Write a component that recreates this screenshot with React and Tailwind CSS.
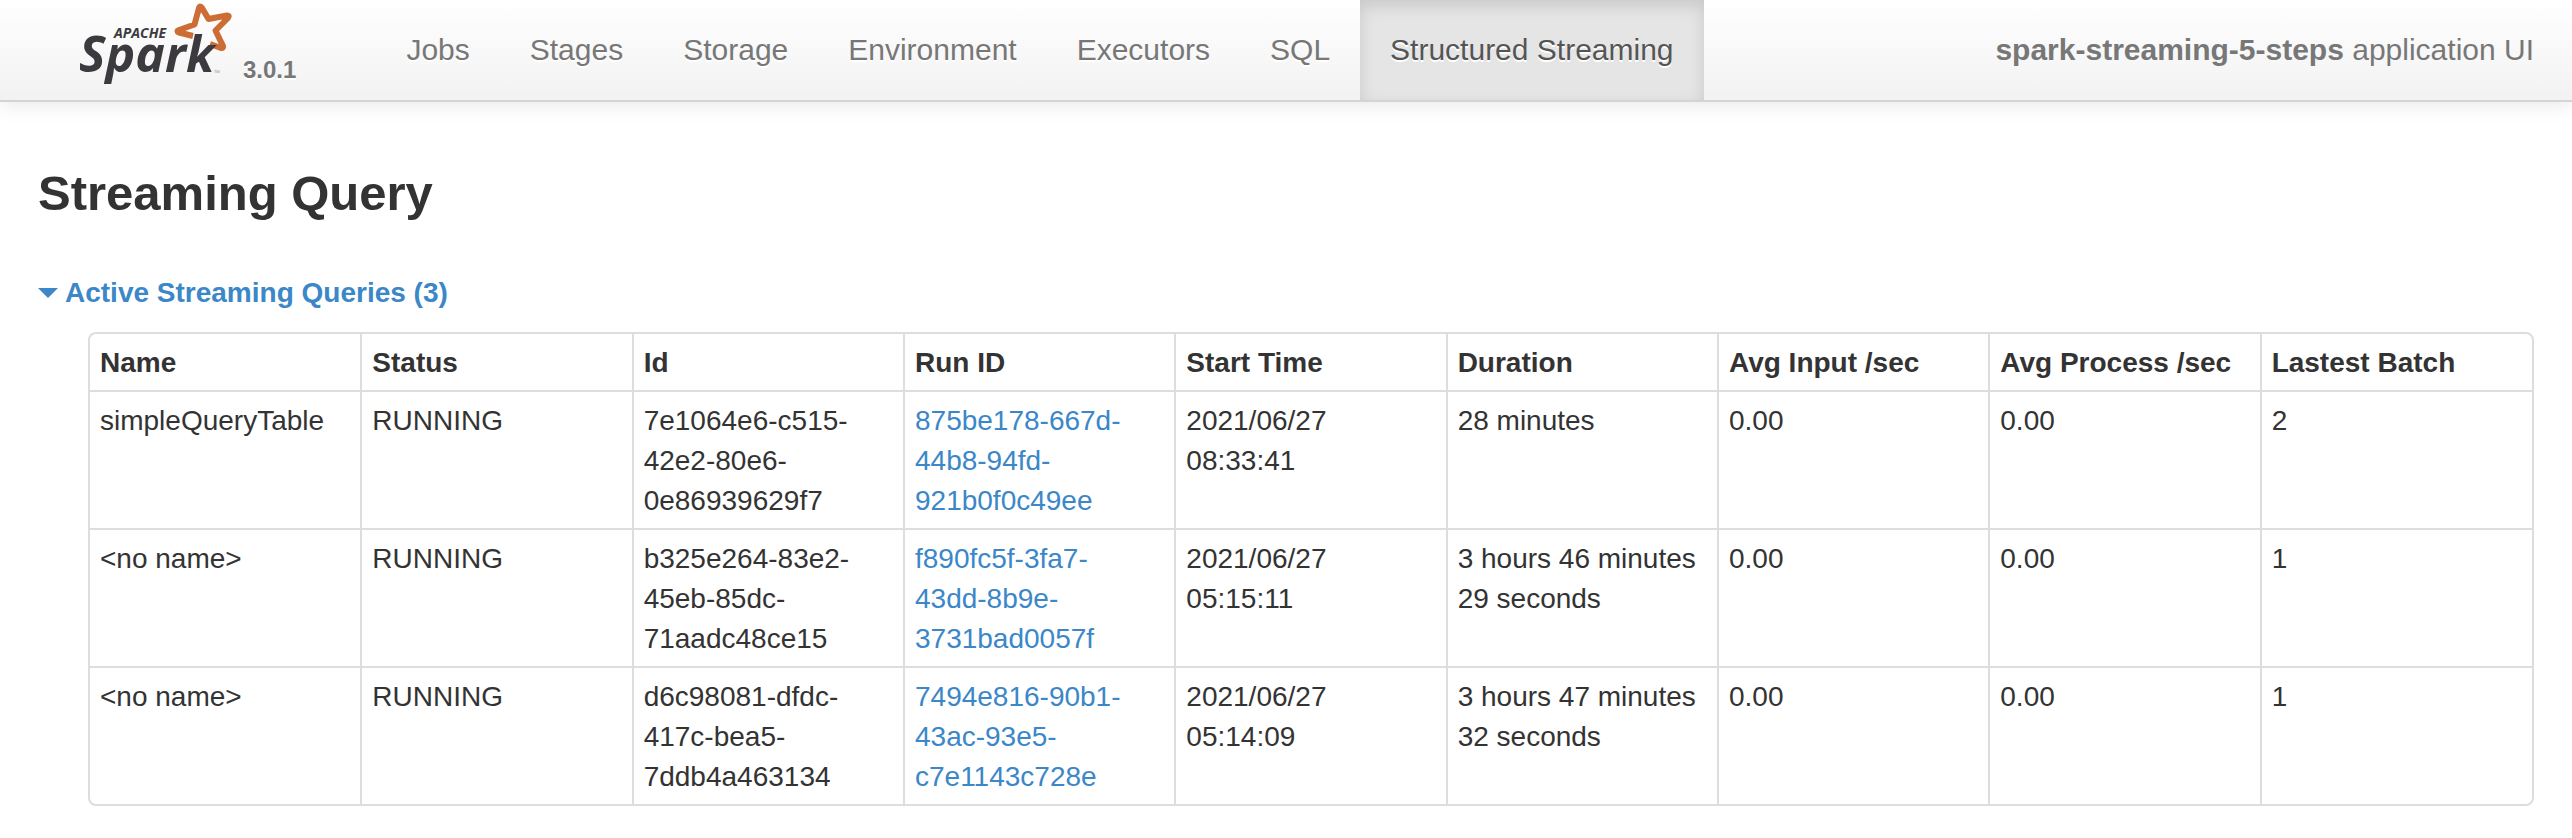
const tabs = ["Jobs", "Stages", "Storage", "Environment", "Executors", "SQL", "Structured Streaming"];

const columns = [
  "Name",
  "Status",
  "Id",
  "Run ID",
  "Start Time",
  "Duration",
  "Avg Input /sec",
  "Avg Process /sec",
  "Lastest Batch",
];

const queries = [
  ["simpleQueryTable", "RUNNING", "7e1064e6-c515-42e2-80e6-0e86939629f7", "875be178-667d-44b8-94fd-921b0f0c49ee", "2021/06/27 08:33:41", "28 minutes", "0.00", "0.00", "2"],
  ["<no name>", "RUNNING", "b325e264-83e2-45eb-85dc-71aadc48ce15", "f890fc5f-3fa7-43dd-8b9e-3731bad0057f", "2021/06/27 05:15:11", "3 hours 46 minutes 29 seconds", "0.00", "0.00", "1"],
  ["<no name>", "RUNNING", "d6c98081-dfdc-417c-bea5-7ddb4a463134", "7494e816-90b1-43ac-93e5-c7e1143c728e", "2021/06/27 05:14:09", "3 hours 47 minutes 32 seconds", "0.00", "0.00", "1"],
];

function SparkLogo() {
  return (
    <svg width="160" height="98" viewBox="0 0 160 98" role="img" aria-label="Apache Spark" className="font-['Open_Sans',sans-serif] font-bold">
      <path
        d="M115 36 L101 32.5 Q98 31 101 30 L116.5 24.5 L121 8 Q122 5 124 8 L130.5 19 L149 15.5 Q152 15.5 150 18 L137.5 30.5 L145 46 Q145.5 48.5 143 48 L132 44"
        fill="none"
        stroke="#cb6d35"
        strokeWidth="6"
        strokeLinejoin="round"
      />
      <text x="36" y="38" fill="#3c3a3e" className="text-[14px] italic">APACHE</text>
      <text x="1" y="72" fill="#3c3a3e" className="text-[50px] italic">Spark</text>
      <text x="136" y="76" fill="#aaa" className="text-[8px]">™</text>
    </svg>
  );
}

function Navbar() {
  return (
    <header className="flex h-[102px] items-stretch border-b-2 border-[#d4d4d4] bg-linear-to-b from-white to-[#f2f2f2] pr-[38px] pl-[78px] text-[30px] leading-10 text-[#777] shadow-[0_2px_20px_rgba(0,0,0,0.1)]">
      <a href="#jobs" className="flex items-start">
        <SparkLogo />
        <span className="mt-[50px] ml-[5px] text-[24px] font-bold [text-shadow:0_2px_0_#fff]">3.0.1</span>
      </a>
      <nav className="ml-20 flex">
        {tabs.map((tab) => {
          const active = tab === "Structured Streaming";
          return (
            <a
              key={tab}
              href={"#" + tab.toLowerCase().replace(" ", "-")}
              aria-current={active ? "page" : undefined}
              className={
                active
                  ? "bg-[#e5e5e5] px-[30px] pt-[30px] text-[#555] shadow-[inset_0_6px_16px_rgba(0,0,0,0.125)] [text-shadow:0_2px_0_#fff]"
                  : "px-[30px] pt-[30px] [text-shadow:0_2px_0_#fff]"
              }
            >
              {tab}
            </a>
          );
        })}
      </nav>
      <p className="ml-auto pt-[30px]">
        <strong>spark-streaming-5-steps</strong> application UI
      </p>
    </header>
  );
}

export default function App() {
  return (
    <div className="bg-white font-['Liberation_Sans',Arial,sans-serif] text-[28px] leading-10 text-[#333]">
      <Navbar />
      <main className="px-[38px]">
        <h3 className="pt-[51px] text-[49px] leading-20 font-bold">Streaming Query</h3>
        <button type="button" aria-expanded="true" className="mt-10 flex items-center gap-[7px] font-bold text-[#3b87c8]">
          <svg width="20" height="10" viewBox="0 0 20 10" aria-hidden="true">
            <path d="M0 0H20L10 10Z" fill="currentColor" />
          </svg>
          Active Streaming Queries (3)
        </button>
        <div className="mt-[19px] ml-[50px] overflow-hidden rounded-lg border-2 border-[#ddd]">
          <table className="w-full table-fixed border-collapse text-left">
            <thead>
              <tr>
                {columns.map((c) => (
                  <th key={c} scope="col" className="border-l-2 border-[#ddd] px-[10px] pt-[9px] pb-[7px] font-bold first:border-l-0">
                    {c}
                  </th>
                ))}
              </tr>
            </thead>
            <tbody>
              {queries.map((q) => (
                <tr key={q[2]}>
                  {q.map((value, i) => (
                    <td key={columns[i]} className="border-t-2 border-l-2 border-[#ddd] px-[10px] pt-[9px] pb-[7px] align-top first:border-l-0">
                      {i === 3 ? (
                        <a href={"#" + value} className="block pr-4 text-[#3b87c8]">
                          {value}
                        </a>
                      ) : (
                        value
                      )}
                    </td>
                  ))}
                </tr>
              ))}
            </tbody>
          </table>
        </div>
      </main>
    </div>
  );
}
